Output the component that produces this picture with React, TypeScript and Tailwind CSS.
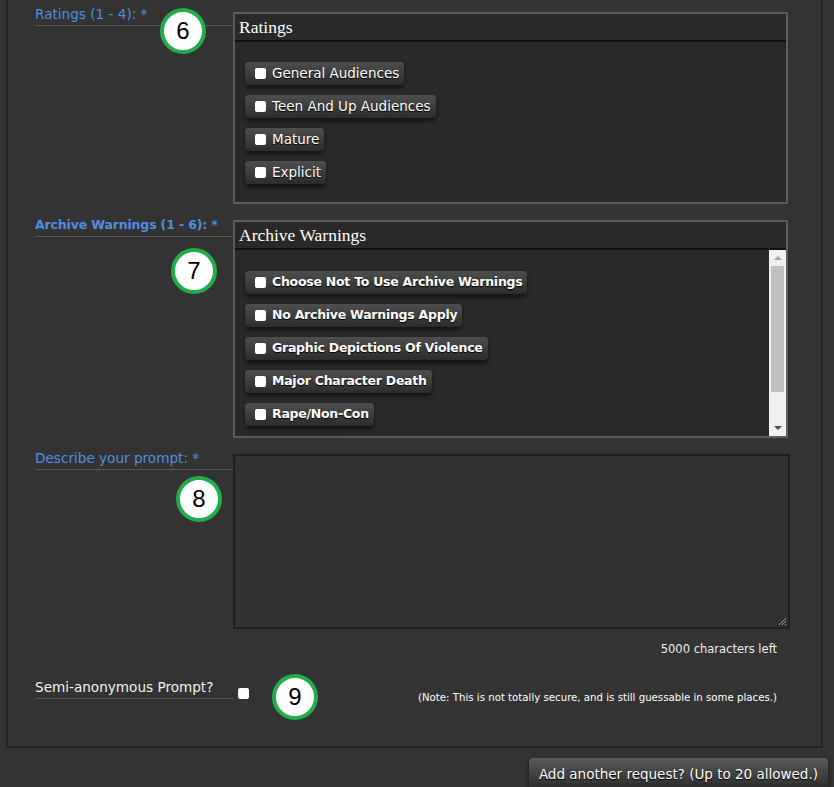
import React from 'react';

const sans = { fontFamily: '"DejaVu Sans", Verdana, sans-serif' };

const ratings = ['General Audiences', 'Teen And Up Audiences', 'Mature', 'Explicit'];
const warnings = [
  'Choose Not To Use Archive Warnings',
  'No Archive Warnings Apply',
  'Graphic Depictions Of Violence',
  'Major Character Death',
  'Rape/Non-Con',
  'Underage',
];

const Badge = ({ n, className }: { n: number; className: string }) => (
  <div
    className={`absolute w-[46px] h-[46px] rounded-full bg-white border-[4px] border-[#22ac4c] flex items-center justify-center text-black text-[24px] ${className}`}
    style={{ fontFamily: '"Liberation Sans", Arial, sans-serif' }}
  >
    {n}
  </div>
);

const Pill = ({ label, bold }: { label: string; bold?: boolean }) => (
  <label
    className={`self-start shrink-0 flex items-center h-[23px] pl-[10px] pr-[5px] rounded-[4px] bg-gradient-to-b from-[#4e4e4e] to-[#2c2c2c] shadow-[0_3px_4px_rgba(0,0,0,0.55)] text-white ${
      bold ? 'font-bold text-[12.5px] tracking-[-0.25px]' : 'text-[13.5px]'
    }`}
    style={{ textShadow: '0 1px 1px #000' }}
  >
    <span className="w-[11px] h-[11px] bg-white rounded-[2px] mr-[6px] shrink-0" />
    {label}
  </label>
);

const FieldLabel = ({ text, bold, white }: { text: string; bold?: boolean; white?: boolean }) => (
  <div
    className={`w-[198px] shrink-0 border-b border-[#575757] pb-[2px] leading-[18px] ${white ? 'text-[#f0f0f0]' : 'text-[#4f8ee0]'} ${
      bold ? 'font-bold text-[12.5px] tracking-[-0.15px]' : 'text-[13.6px]'
    }`}
  >
    {text}
  </div>
);

const BoxHeader = ({ title }: { title: string }) => (
  <div
    className="h-[28px] px-[4px] border-b-2 border-[#111] text-white text-[17.5px] leading-[27px]"
    style={{ fontFamily: '"Liberation Serif", "Times New Roman", serif' }}
  >
    {title}
  </div>
);

export default function App() {
  return (
    <div className="w-[834px] h-[787px] overflow-hidden bg-[#333333] relative" style={sans}>
      <div className="ml-[6px] w-[817px] h-[748px] border-l-2 border-r-2 border-b-2 border-[#242424] pl-[27px] pt-[5px]">
        {/* Ratings */}
        <div className="flex items-start">
          <FieldLabel text="Ratings (1 - 4): *" />
          <div className="mt-[7px] w-[555px] border-2 border-[#5c5c5c] bg-[#292929]">
            <BoxHeader title="Ratings" />
            <div className="flex flex-col gap-[10px] pt-[20px] pb-[18px] pl-[10px]">
              {ratings.map((r) => (
                <Pill key={r} label={r} />
              ))}
            </div>
          </div>
        </div>

        {/* Archive Warnings */}
        <div className="flex items-start mt-[12px]">
          <FieldLabel text="Archive Warnings (1 - 6): *" bold />
          <div className="mt-[4px] w-[555px] border-2 border-[#5c5c5c] bg-[#292929]">
            <BoxHeader title="Archive Warnings" />
            <div className="flex h-[186px]">
              <div className="flex-1 overflow-hidden flex flex-col gap-[10px] pt-[21px] pl-[10px]">
                {warnings.map((w) => (
                  <Pill key={w} label={w} bold />
                ))}
              </div>
              <div className="w-[17px] bg-[#f0f0f0] flex flex-col items-center">
                <div className="h-[16px] flex items-center justify-center">
                  <div className="w-0 h-0 border-l-[4px] border-r-[4px] border-b-[4px] border-l-transparent border-r-transparent border-b-[#a3a3a3]" />
                </div>
                <div className="w-[13px] h-[126px] bg-[#c1c1c1]" />
                <div className="flex-1" />
                <div className="h-[16px] flex items-center justify-center">
                  <div className="w-0 h-0 border-l-[4px] border-r-[4px] border-t-[4px] border-l-transparent border-r-transparent border-t-[#505050]" />
                </div>
              </div>
            </div>
          </div>
        </div>

        {/* Prompt */}
        <div className="flex items-start mt-[11px]">
          <FieldLabel text="Describe your prompt: *" />
          <div className="mt-[5px] relative w-[557px] h-[175px] border-2 border-[#1f1f1f] bg-[#313131]">
            <svg className="absolute right-[1px] bottom-[1px]" width="10" height="10" viewBox="0 0 10 10">
              <path d="M9 2 L2 9 M9 5 L5 9 M9 8 L8 9" stroke="#9a9a9a" strokeWidth="1" />
            </svg>
          </div>
        </div>
        <div className="w-[742px] text-right text-[11.5px] text-[#eee] mt-[12px] leading-[16px]">
          5000 characters left
        </div>

        {/* Semi-anonymous */}
        <div className="flex items-start mt-[21px]">
          <FieldLabel text="Semi-anonymous Prompt?" white />
          <div className="ml-[5px] mt-[10px] w-[11px] h-[11px] bg-white rounded-[2px]" />
          <div className="ml-[169px] mt-[13px] text-[10.2px] text-white leading-[14px]">
            (Note: This is not totally secure, and is still guessable in some places.)
          </div>
        </div>
      </div>

      <div className="flex justify-end pr-[6px] mt-[10px]">
        <button
          className="h-[32px] px-[10px] rounded-[4px] bg-gradient-to-b from-[#5a5a5a] to-[#2a2a2a] shadow-[0_2px_4px_rgba(0,0,0,0.6)] text-white text-[13.5px] leading-[28px] self-start"
          style={{ textShadow: '0 1px 1px #000' }}
        >
          Add another request? (Up to 20 allowed.)
        </button>
      </div>

      <Badge n={6} className="left-[160px] top-[8px]" />
      <Badge n={7} className="left-[171px] top-[248px]" />
      <Badge n={8} className="left-[176px] top-[476px]" />
      <Badge n={9} className="left-[272px] top-[674px]" />
    </div>
  );
}
